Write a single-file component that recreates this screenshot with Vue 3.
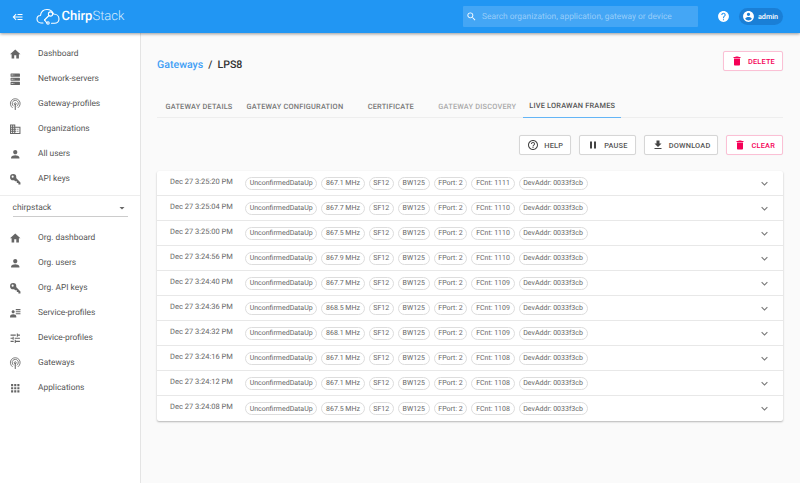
<script setup>
const I = {
  home: 'M10 20v-6h4v6h5v-8h3L12 3 2 12h3v8z',
  server: 'M4 1h16a1 1 0 0 1 1 1v4a1 1 0 0 1-1 1H4a1 1 0 0 1-1-1V2a1 1 0 0 1 1-1m0 8h16a1 1 0 0 1 1 1v4a1 1 0 0 1-1 1H4a1 1 0 0 1-1-1v-4a1 1 0 0 1 1-1m0 8h16a1 1 0 0 1 1 1v4a1 1 0 0 1-1 1H4a1 1 0 0 1-1-1v-4a1 1 0 0 1 1-1M9 5h1V3H9v2m0 8h1v-2H9v2m0 8h1v-2H9v2M5 3v2h2V3H5m0 8v2h2v-2H5m0 8v2h2v-2H5z',
  domain: 'M12 7V3H2v18h20V7H12zM6 19H4v-2h2v2zm0-4H4v-2h2v2zm0-4H4V9h2v2zm0-4H4V5h2v2zm4 12H8v-2h2v2zm0-4H8v-2h2v2zm0-4H8V9h2v2zm0-4H8V5h2v2zm10 12h-8v-2h2v-2h-2v-2h2v-2h-2V9h8v10zm-2-8h-2v2h2v-2zm0 4h-2v2h2v-2z',
  person: 'M12 12c2.21 0 4-1.79 4-4s-1.79-4-4-4-4 1.79-4 4 1.79 4 4 4zm0 2c-2.67 0-8 1.34-8 4v2h16v-2c0-2.66-5.33-4-8-4z',
  key: 'M22,18V22H18V19H15V16H12L9.74,13.74C9.19,13.91 8.61,14 8,14A6,6 0 0,1 2,8A6,6 0 0,1 8,2A6,6 0 0,1 14,8C14,8.61 13.91,9.19 13.74,9.74L22,18M7,5A2,2 0 0,0 5,7A2,2 0 0,0 7,9A2,2 0 0,0 9,7A2,2 0 0,0 7,5Z',
  details: 'M11,9C11,10.66 9.66,12 8,12C6.34,12 5,10.66 5,9C5,7.34 6.34,6 8,6C9.66,6 11,7.34 11,9M14,20H2V18C2,15.79 4.69,14 8,14C11.31,14 14,15.79 14,18M22,12V14H13V12M22,8V10H13V8M22,4V6H13V4Z',
  tune: 'M3 17v2h6v-2H3zM3 5v2h10V5H3zm10 16v-2h8v-2h-8v-2h-2v6h2zM7 9v2H3v2h4v2h2V9H7zm14 4v-2H11v2h10zm-6-4h2V7h4V5h-4V3h-2v6z',
  apps: 'M4 8h4V4H4v4zm6 12h4v-4h-4v4zm-6 0h4v-4H4v4zm0-6h4v-4H4v4zm6 0h4v-4h-4v4zm6-10v4h4V4h-4zm-6 4h4V4h-4v4zm6 6h4v-4h-4v4zm0 6h4v-4h-4v4z',
  del: 'M6 19c0 1.1.9 2 2 2h8c1.1 0 2-.9 2-2V7H6v12zM19 4h-3.5l-1-1h-5l-1 1H5v2h14V4z',
  helpO: 'M11 18h2v-2h-2v2zm1-16C6.48 2 2 6.48 2 12s4.48 10 10 10 10-4.48 10-10S17.52 2 12 2zm0 18c-4.41 0-8-3.59-8-8s3.59-8 8-8 8 3.59 8 8-3.59 8-8 8zm0-14c-2.21 0-4 1.79-4 4h2c0-1.1.9-2 2-2s2 .9 2 2c0 2-3 1.75-3 5h2c0-2.25 3-2.5 3-5 0-2.21-1.79-4-4-4z',
  help: 'M12 2C6.48 2 2 6.48 2 12s4.48 10 10 10 10-4.48 10-10S17.52 2 12 2zm1 17h-2v-2h2v2zm2.07-7.75l-.9.92C13.45 12.9 13 13.5 13 15h-2v-.5c0-1.1.45-2.1 1.17-2.83l1.24-1.26c.37-.36.59-.86.59-1.41 0-1.1-.9-2-2-2s-2 .9-2 2H8c0-2.21 1.79-4 4-4s4 1.79 4 4c0 .88-.36 1.68-.93 2.25z',
  pause: 'M6 19h4V5H6v14zm8-14v14h4V5h-4z',
  download: 'M19 9h-4V3H9v6H5l7 7 7-7zM5 18v2h14v-2H5z',
  account: 'M12 2C6.48 2 2 6.48 2 12s4.48 10 10 10 10-4.48 10-10S17.52 2 12 2zm0 3c1.66 0 3 1.34 3 3s-1.34 3-3 3-3-1.34-3-3 1.34-3 3-3zm0 14.2c-2.5 0-4.71-1.28-6-3.22.03-1.99 4-3.08 6-3.08 1.99 0 5.97 1.09 6 3.08-1.29 1.94-3.5 3.22-6 3.22z',
  search: 'M15.5 14h-.79l-.28-.27C15.41 12.59 16 11.11 16 9.5 16 5.91 13.09 3 9.5 3S3 5.91 3 9.5 5.91 16 9.5 16c1.61 0 3.09-.59 4.23-1.57l.27.28v.79l5 4.99L20.49 19l-4.99-5zm-6 0C7.01 14 5 11.99 5 9.5S7.01 5 9.5 5 14 7.01 14 9.5 11.99 14 9.5 14z',
  chevron: 'M16.59 8.59L12 13.17 7.41 8.59 6 10l6 6 6-6z',
  back: 'M5,13L9,17L7.6,18.42L1.18,12L7.6,5.58L9,7L5,11H21V13H5M21,6V8H11V6H21M21,16V18H11V16H21Z',
  arrow: 'M7 10l5 5 5-5z'
}
const globalNav = [
  ['Dashboard', 'home'], ['Network-servers', 'server'], ['Gateway-profiles', null],
  ['Organizations', 'domain'], ['All users', 'person'], ['API keys', 'key']
]
const orgNav = [
  ['Org. dashboard', 'home'], ['Org. users', 'person'], ['Org. API keys', 'key'],
  ['Service-profiles', 'details'], ['Device-profiles', 'tune'], ['Gateways', null], ['Applications', 'apps']
]
const tabs = [
  { label: 'Gateway details' }, { label: 'Gateway configuration' }, { label: 'Certificate' },
  { label: 'Gateway discovery', muted: true }, { label: 'Live LoRaWAN frames', active: true }
]
const buttons = [
  { label: 'Help', icon: 'helpO' }, { label: 'Pause', icon: 'pause' },
  { label: 'Download', icon: 'download' }, { label: 'Clear', icon: 'del', danger: true }
]
const frames = [
  ['Dec 27 3:25:20 PM', '867.1 MHz', 1111], ['Dec 27 3:25:04 PM', '867.7 MHz', 1110],
  ['Dec 27 3:25:00 PM', '867.5 MHz', 1110], ['Dec 27 3:24:56 PM', '867.9 MHz', 1110],
  ['Dec 27 3:24:40 PM', '867.7 MHz', 1109], ['Dec 27 3:24:36 PM', '868.5 MHz', 1109],
  ['Dec 27 3:24:32 PM', '868.1 MHz', 1109], ['Dec 27 3:24:16 PM', '867.1 MHz', 1108],
  ['Dec 27 3:24:12 PM', '867.1 MHz', 1108], ['Dec 27 3:24:08 PM', '867.5 MHz', 1108]
]
const chips = (f) => ['UnconfirmedDataUp', f[1], 'SF12', 'BW125', 'FPort: 2', `FCnt: ${f[2]}`, 'DevAddr: 0033f3cb']
</script>

<template>
  <div class="app">
    <header class="bar">
      <svg class="toggle" viewBox="0 0 24 24"><path :d="I.back" /></svg>
      <div class="logo">
        <svg class="cloud" viewBox="0 0 48 34" fill="none" stroke="#fff" stroke-width="2.2" stroke-linecap="round" stroke-linejoin="round">
          <path d="M14 30H10C5 30 2 26 2 22C2 18 5 15 9 15C10 8 15 3 22 3C28 3 33 6.5 35 12C41 12 46 16 46 22C46 27 42 30.5 37 30.5H31" />
          <path d="M17 24L26 15" />
          <circle cx="29" cy="12" r="4.2" />
          <circle cx="24" cy="30" r="2.4" />
          <path d="M17 24C19 26 20 28 22 30" />
        </svg>
        <span class="wordmark"><b>Chirp</b>Stack</span>
      </div>
      <div class="search">
        <svg viewBox="0 0 24 24"><path :d="I.search" /></svg>
        <span>Search organization, application, gateway or device</span>
      </div>
      <svg class="help" viewBox="0 0 24 24"><path :d="I.help" /></svg>
      <div class="user">
        <svg viewBox="0 0 24 24"><path :d="I.account" /></svg>
        <span>admin</span>
      </div>
    </header>

    <div class="body">
      <aside class="side">
        <nav class="nav first">
          <a v-for="n in globalNav" :key="n[0]" class="item">
            <svg v-if="n[1]" viewBox="0 0 24 24"><path :d="I[n[1]]" /></svg>
            <svg v-else class="wifi" viewBox="0 0 24 24" stroke-linecap="round">
              <path d="M6.3 18.5A9.5 9.5 0 1 1 17.7 18.5M8.5 15.5A6 6 0 1 1 15.5 15.5" />
              <path d="M10.6 12.5A2 2 0 1 1 13.4 12.5" />
              <path d="M12 12V22" stroke-width="2" />
            </svg>
            <span>{{ n[0] }}</span>
          </a>
        </nav>
        <div class="org">
          <span>chirpstack</span>
          <svg viewBox="0 0 24 24"><path :d="I.arrow" /></svg>
        </div>
        <nav class="nav">
          <a v-for="n in orgNav" :key="n[0]" class="item">
            <svg v-if="n[1]" viewBox="0 0 24 24"><path :d="I[n[1]]" /></svg>
            <svg v-else class="wifi" viewBox="0 0 24 24" stroke-linecap="round">
              <path d="M6.3 18.5A9.5 9.5 0 1 1 17.7 18.5M8.5 15.5A6 6 0 1 1 15.5 15.5" />
              <path d="M10.6 12.5A2 2 0 1 1 13.4 12.5" />
              <path d="M12 12V22" stroke-width="2" />
            </svg>
            <span>{{ n[0] }}</span>
          </a>
        </nav>
      </aside>

      <main class="main">
        <div class="title-row">
          <h1><a>Gateways</a><i>/</i>LPS8</h1>
          <button class="btn danger"><svg viewBox="0 0 24 24"><path :d="I.del" /></svg>Delete</button>
        </div>

        <div class="tabs">
          <div v-for="t in tabs" :key="t.label" class="tab" :class="{ muted: t.muted, active: t.active }">{{ t.label }}</div>
        </div>

        <div class="actions">
          <button v-for="b in buttons" :key="b.label" class="btn" :class="{ danger: b.danger }">
            <svg viewBox="0 0 24 24"><path :d="I[b.icon]" /></svg>{{ b.label }}
          </button>
        </div>

        <section class="list">
          <div v-for="f in frames" :key="f[0]" class="row">
            <span class="date">{{ f[0] }}</span>
            <div class="chips">
              <span v-for="c in chips(f)" :key="c" class="chip">{{ c }}</span>
            </div>
            <svg class="chev" viewBox="0 0 24 24"><path :d="I.chevron" /></svg>
          </div>
        </section>
      </main>
    </div>
  </div>
</template>

<style scoped>
.app { width: 800px; height: 483px; display: flex; flex-direction: column; overflow: hidden; background: #fafafa; font-family: Roboto, "Liberation Sans", sans-serif; color: #444; text-rendering: geometricPrecision; }
.bar { position: relative; z-index: 2; flex: none; height: 33px; padding-right: 17px; box-sizing: border-box; background: #2196f3; box-shadow: 0 1px 3px rgba(0,0,0,.4); display: flex; align-items: center; }
.toggle { width: 12px; height: 12px; margin-left: 12px; fill: #fff; }
.logo { display: flex; align-items: center; margin-left: 12px; }
.cloud { width: 24px; height: 17px; }
.wordmark { margin-left: 1.5px; font-size: 13px; color: #d6ecfd; font-weight: 300; }
.wordmark b { color: #fff; font-weight: 500; }
.search { margin-left: auto; width: 235px; height: 21px; background: rgba(255,255,255,.16); border-radius: 1px; display: flex; align-items: center; color: rgba(255,255,255,.45); font-size: 8.4px; }
.search svg { width: 11px; height: 11px; margin: 0 5px 0 3px; fill: #fff; flex: none; }
.help { width: 13px; height: 13px; margin-left: 18.5px; fill: #fff; }
.user { margin-left: 9.5px; width: 44px; height: 17px; border-radius: 9px; background: #1a7fd6; display: flex; align-items: center; color: #fff; font-size: 7.2px; font-weight: 500; }
.user svg { width: 13px; height: 13px; margin: 0 3.5px 0 2.5px; fill: #fff; flex: none; }
.body { flex: 1; display: flex; min-height: 0; }
.side { flex: none; width: 140px; background: #fff; border-right: 1px solid #e4e4e4; }
.nav { display: flex; flex-direction: column; }
.nav.first { padding: 8.5px 0 3.5px; border-bottom: 1px solid #ededed; }
.item { height: 25px; display: flex; align-items: center; font-size: 8.4px; color: #555; }
.item svg { width: 12.5px; height: 12.5px; margin-left: 8.5px; margin-right: 17px; fill: #666; flex: none; }
.item svg.wifi { fill: none; stroke: #666; stroke-width: 1.6; }
.org { margin: 0 12px 8.5px 12.5px; height: 21px; padding-top: 4px; box-sizing: border-box; border-bottom: 1px solid #ccc; display: flex; align-items: center; justify-content: space-between; font-size: 8.4px; color: #555; }
.org svg { width: 12px; height: 12px; fill: #666; }
.main { flex: 1; padding: 0 17px 0 16px; min-width: 0; }
.title-row { height: 38px; margin-top: 18px; display: flex; align-items: flex-start; justify-content: space-between; }
h1 { margin: 7px 0 0; font-size: 10.6px; line-height: 13px; font-weight: 500; color: #333; }
h1 a { color: #42a0f5; }
h1 i { font-style: normal; margin: 0 5px; }
.btn { height: 20px; padding: 0 7px; box-sizing: border-box; border: 1px solid #d6d6d6; border-radius: 2px; background: #fff; font-family: inherit; font-size: 7.4px; font-weight: 500; letter-spacing: .2px; text-transform: uppercase; color: #555; display: flex; align-items: center; gap: 5px; box-shadow: 0 0 1px rgba(0,0,0,.08); }
.btn svg { width: 12px; height: 12px; fill: #444; flex: none; }
.btn.danger { border-color: #fbc0d5; color: #f50057; }
.btn.danger svg { fill: #f50057; }
.tabs { display: flex; padding-left: 1.5px; border-bottom: 1px solid #eee; height: 24px; box-sizing: border-box; margin-top: 5px; }
.tab { min-width: 81px; box-sizing: border-box; padding: 0 7px; height: 24px; display: flex; align-items: center; justify-content: center; font-size: 7.4px; font-weight: 500; letter-spacing: .2px; text-transform: uppercase; color: #777; }
.tab.muted { color: #aaa; }
.tab.active { color: #555; padding: 0 6px; border-bottom: 1px solid #64b5f6; }
.actions { display: flex; justify-content: flex-end; gap: 8px; margin: 17px 0 16px; }
.list { background: #fff; border-radius: 2px; box-shadow: 0 1px 2px rgba(0,0,0,.28); }
.row { height: 25px; box-sizing: border-box; display: flex; align-items: center; padding: 0 12px 0 13px; border-bottom: 1px solid #e8e8e8; }
.row:last-child { border-bottom: 0; }
.date { width: 75px; flex: none; font-size: 7.5px; color: #666; position: relative; top: -2px; }
.chips { display: flex; gap: 4px; flex: 1; }
.chip { height: 13px; box-sizing: border-box; padding: 0 3.7px; border: 1px solid #ddd; border-radius: 7px; display: flex; align-items: center; font-size: 7px; color: #666; white-space: nowrap; }
.chev { width: 13px; height: 13px; fill: #777; flex: none; }
</style>
